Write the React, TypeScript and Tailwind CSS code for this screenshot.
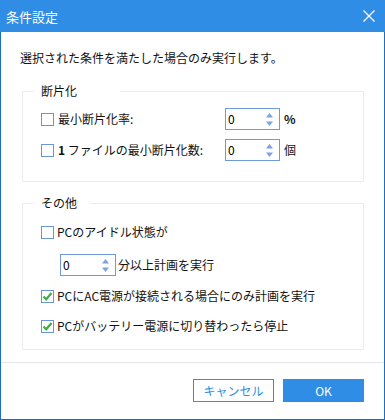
import React from "react";

const font = { fontFamily: '"Noto Sans CJK JP", "Noto Sans", sans-serif' };

function Box({ checked }: { checked?: boolean }) {
  return (
    <span className="relative w-[13px] h-[13px] shrink-0 border border-[#6b95d8] bg-white">
      {checked && (
        <svg className="absolute left-[0px] top-[0px]" width="11" height="11" viewBox="0 0 11 11">
          <path d="M1.5 5.5 L4.2 8.3 L9.5 2" fill="none" stroke="#3cb043" strokeWidth="2.2" />
        </svg>
      )}
    </span>
  );
}

function Spin({ w }: { w: string }) {
  return (
    <div className={`${w} h-[22px] border border-[#6f9ada] bg-white flex items-center justify-between pl-[2px] pr-[5px] shrink-0`}>
      <span className="text-[12px] leading-none text-black">0</span>
      <svg width="9" height="15" viewBox="0 0 9 15">
        <path d="M4.5 1 L8 5.5 L1 5.5 Z" fill="#7aa3df" />
        <path d="M4.5 14 L8 9.5 L1 9.5 Z" fill="#7aa3df" />
      </svg>
    </div>
  );
}

export default function App() {
  return (
    <div style={font} className="w-[385px] h-[420px] flex flex-col bg-white text-[12px] text-[#111] border-l border-r border-b border-[#1b6ec2]">
      <div className="h-[32px] -mx-px bg-[#2f8de5] flex items-center justify-between pl-[6px] pr-[10px] shrink-0">
        <span className="text-white text-[13px] leading-none">条件設定</span>
        <svg width="12" height="12" viewBox="0 0 12 12">
          <path d="M0.5 0.5 L11.5 11.5 M11.5 0.5 L0.5 11.5" stroke="white" strokeWidth="1.3" />
        </svg>
      </div>

      <p className="mt-[18px] ml-[19px] leading-[16px]">選択された条件を満たした場合のみ実行します。</p>

      <div className="relative mt-[25px] ml-[21px] w-[342px] h-[91px] border border-[#ececec] pl-[18px] pt-[16px] flex flex-col gap-[9px]">
        <span className="absolute left-[11px] top-[-9px] w-[86px] pl-[7px] bg-white leading-[16px]">断片化</span>
        <div className="flex items-center h-[22px]">
          <Box />
          <span className="ml-[4px] w-[167px]">最小断片化率:</span>
          <Spin w="w-[55px]" />
          <span className="ml-[4px] font-bold">%</span>
        </div>
        <div className="flex items-center h-[22px]">
          <Box />
          <span className="ml-[4px] w-[167px]"><b>1</b> ファイルの最小断片化数:</span>
          <Spin w="w-[55px]" />
          <span className="ml-[4px]">個</span>
        </div>
      </div>

      <div className="relative mt-[21px] ml-[21px] w-[342px] h-[147px] border border-[#ececec] pl-[18px] pt-[17px] flex flex-col">
        <span className="absolute left-[11px] top-[-9px] w-[56px] pl-[7px] bg-white leading-[16px]">その他</span>
        <div className="flex items-center h-[22px]">
          <Box />
          <span className="ml-[3px]">PCのアイドル状態が</span>
        </div>
        <div className="flex items-center h-[22px] mt-[11px] ml-[19px]">
          <Spin w="w-[56px]" />
          <span className="ml-[2px]">分以上計画を実行</span>
        </div>
        <div className="flex items-center h-[22px] mt-[9px]">
          <Box checked />
          <span className="ml-[3px]">PCにAC電源が接続される場合にのみ計画を実行</span>
        </div>
        <div className="flex items-center h-[22px] mt-[8px]">
          <Box checked />
          <span className="ml-[3px]">PCがバッテリー電源に切り替わったら停止</span>
        </div>
      </div>

      <div className="mt-[12px] h-px bg-[#e2e6eb]" />

      <div className="flex justify-end gap-[9px] mt-[16px] mr-[20px]">
        <button className="w-[81px] h-[23px] border border-[#2f8de5] text-[#2f8de5] text-[12px] leading-none bg-white">キャンセル</button>
        <button className="w-[81px] h-[23px] bg-[#2f8de5] text-white text-[12px] leading-none">OK</button>
      </div>
    </div>
  );
}
